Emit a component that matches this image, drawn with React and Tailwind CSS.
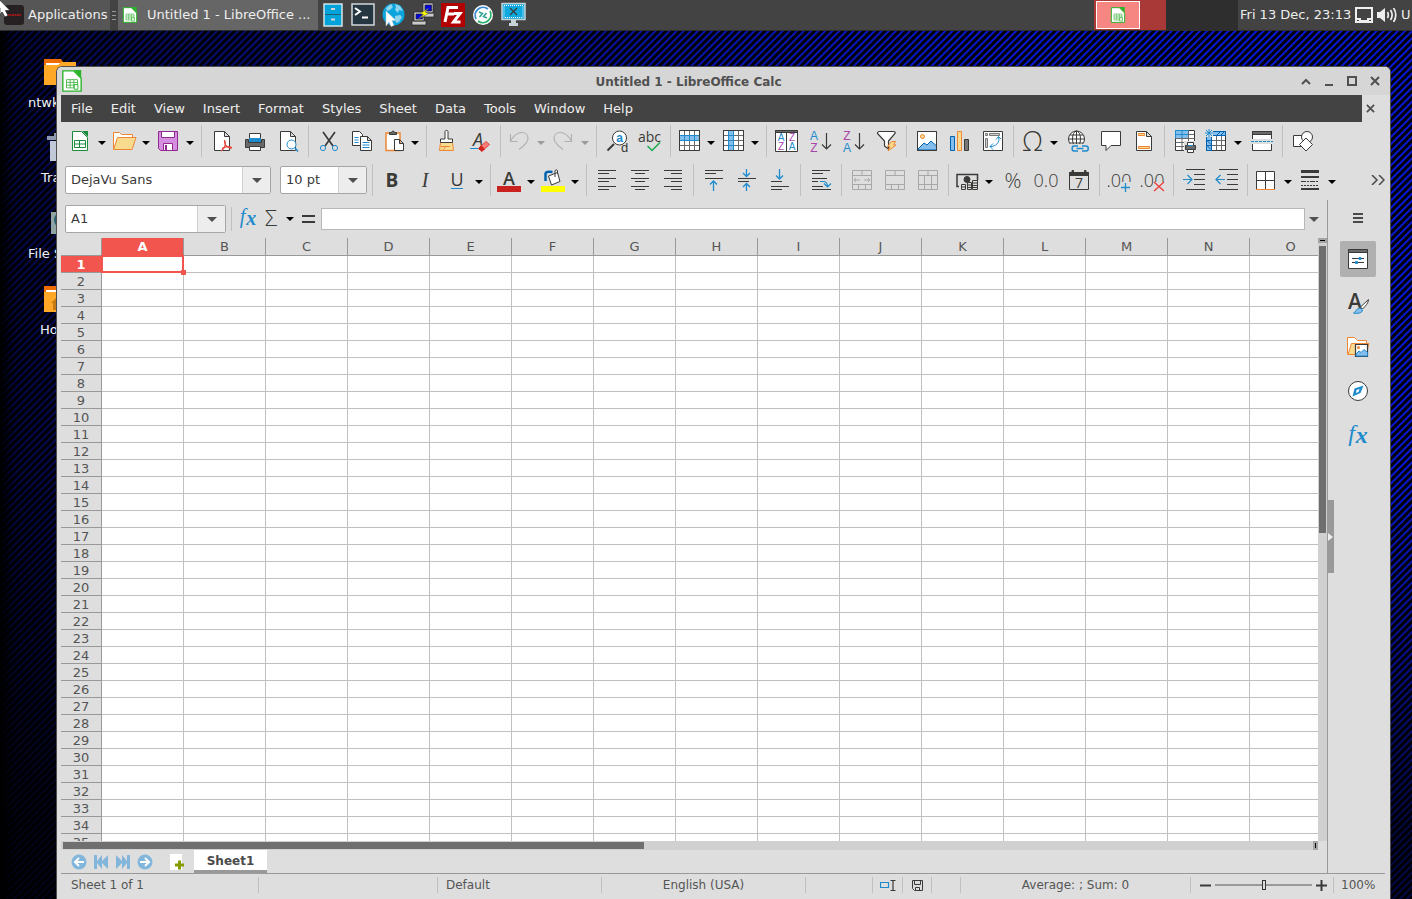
import React, { useState } from 'react'

const DARK = '#3a3a38'
const BLUE = '#1e8bcd'
const SKY = '#83beec'
const ORANGE = '#ed8733'
const PURPLE = '#a845ab'
const SANS = '"Open Sans", sans-serif'
const NARROW = '"Liberation Sans", sans-serif'
const SERIF = '"Liberation Serif", serif'

const COLUMNS = 'ABCDEFGHIJKLMNO'.split('')
const ROWS = Array.from({ length: 35 }, (_, i) => i + 1)
const MENUS = ['File', 'Edit', 'View', 'Insert', 'Format', 'Styles', 'Sheet', 'Data', 'Tools', 'Window', 'Help']

const Svg = ({ children, className = 'size-6' }) => (
  <svg viewBox="0 0 24 24" fill="none" stroke={DARK} strokeWidth="1" className={`${className} block shrink-0 overflow-visible`} aria-hidden="true">
    {children}
  </svg>
)

const Glyph = ({ x, y, size, fill = DARK, weight = 400, style = 'normal', font = SANS, children }) => (
  <text x={x} y={y} fontSize={size} fill={fill} stroke="none" textAnchor="middle" fontFamily={font} fontWeight={weight} fontStyle={style}>{children}</text>
)

const Lines = ({ rows, color = DARK }) => rows.map(([x1, x2, y]) => <path key={y} stroke={color} d={`M${x1} ${y}H${x2}`} />)

const Page = ({ x = 5.5, color = DARK }) => (
  <path fill="#fff" stroke={color} d={`M${x} 2.5h10l5 5v14h-15z M${x + 10} 2.5v5h5`} />
)

/* file and edit icons */
const NewIcon = () => (
  <Svg>
    <path fill="#fff" stroke="#1b8b3e" d="M3.5 2.5h9l6 6v13h-15z" />
    <path fill="#1b8b3e" stroke="none" d="M13 2h6v6z" />
    <path stroke="#1b8b3e" d="M5.5 11.5h11v7h-11z M5.5 15h11 M10.5 11.5v7" />
  </Svg>
)
const OpenIcon = () => (
  <Svg>
    <path fill="#fff" stroke={ORANGE} d="M.5 20.5v-17h6l2 2h11v4" />
    <path fill="#f8db8f" stroke={ORANGE} d="M4.5 8.5H23l-4 12H.5z" />
  </Svg>
)
const SaveIcon = () => (
  <Svg>
    <path fill="#d58fe0" stroke="#92278f" d="M1.5 2.5h19v19h-17l-2-2z" />
    <path fill="#fff" stroke="#92278f" d="M4.5 2.5h13v6h-13z M6.5 14.5h9v7h-9z" />
    <path stroke="#92278f" strokeWidth="2" d="M9 16v5" />
  </Svg>
)
const PdfIcon = () => (
  <Svg>
    <Page />
    <path stroke="#e8453c" strokeWidth="1.3" d="M15.5 11c-.5 4 2 7.5 7 8.500 M16 12c1 4-1 8-4 10 M13 19.500c3-2 6-2.500 10-1" />
  </Svg>
)
const PrintIcon = () => (
  <Svg>
    <path fill="#fff" d="M7.5 4.5h11v6h-11z" />
    <path fill={BLUE} stroke="none" d="M7 9h12v4H7z" />
    <path fill="#696969" d="M3.5 10.5h3v3h13v-3h3v8h-19z" />
    <path fill="#fff" d="M7.5 17.5h11v4h-11z" />
  </Svg>
)
const PreviewIcon = () => (
  <Svg>
    <Page />
    <circle cx="16.5" cy="15.5" r="4.5" fill="#fff" stroke={BLUE} />
    <path stroke={BLUE} strokeWidth="1.5" d="M20 19l3 3.5" />
  </Svg>
)
const CutIcon = () => (
  <Svg>
    <path strokeWidth="1.7" d="M7 3l10 14 M19 3L9 17" />
    <circle cx="7" cy="19" r="2.6" stroke={BLUE} />
    <circle cx="19" cy="19" r="2.6" stroke={BLUE} />
  </Svg>
)
const CopyIcon = () => (
  <Svg>
    <path fill="#fff" d="M3.5 2.5h7l3 3v11h-10z" />
    <path stroke={BLUE} d="M5.5 8.5h4 M5.5 11h4 M5.5 13.5h4" />
    <path fill="#fff" d="M11.5 7.5h7l4 4v10h-11z M18.5 7.5v4h4" />
    <path stroke={BLUE} d="M13.5 13.5h7 M13.5 16h7 M13.5 18.5h7" />
  </Svg>
)
const PasteIcon = () => (
  <Svg>
    <path fill="#fff" stroke={ORANGE} strokeWidth="1.5" d="M4 4h14v17.5H4z" />
    <path fill="#696969" d="M7.5 5.5v-2h2l1-1.5h1l1 1.5h2v2z" />
    <path fill="#fff" d="M12.5 10.5h5l4 4v7h-9z M17.5 10.5v4h4" />
  </Svg>
)
const CloneIcon = () => (
  <Svg>
    <path fill="#f8db8f" stroke={ORANGE} d="M6.5 13.5h12l1 8h-14z M7 17.5h9 M9 21c1-1 2-2 2-3.500" />
    <path fill="#fff" d="M11 10V2.500c0-1.500 3-1.500 3 0V10h4.500v3.500h-12V10z" />
  </Svg>
)
const ClearIcon = () => (
  <Svg>
    <Glyph x="11" y="17" size="18" style="italic">A</Glyph>
    <path stroke={BLUE} d="M3 19.5h8" />
    <path fill="#f77d7b" stroke="#e8453c" d="M14 17l5-4.500 3.500 3-5 4.500z" />
    <path fill="#d7201f" stroke="#c9211e" d="M11.500 19.500l2.500-2.500 3.500 3-2.500 2.500z" />
  </Svg>
)
const UndoIcon = () => (
  <Svg><path stroke="#b1b1b1" strokeWidth="1.2" d="M2.5 5v7.500h7 M2.500 12C6 6 10 3.500 14 3.500c4 0 6 3 6 6 0 4-5 8-9 11" /></Svg>
)
const RedoIcon = () => (
  <Svg><path stroke="#b1b1b1" strokeWidth="1.2" d="M19.5 5v7.500h-7 M19.500 12C16 6 12 3.500 8 3.500c-4 0-6 3-6 6 0 4 5 8 9 11" /></Svg>
)
const FindIcon = () => (
  <Svg>
    <circle cx="15.5" cy="9" r="7" fill="#fff" />
    <path strokeWidth="2" d="M10 15l-6.500 6.500" />
    <Glyph x="15.5" y="13" size="12" weight="700" fill={BLUE} font={NARROW}>a</Glyph>
    <Glyph x="20.5" y="23" size="13" font={NARROW}>d</Glyph>
  </Svg>
)
const SpellIcon = () => (
  <Svg>
    <Glyph x="12.5" y="13" size="14">abc</Glyph>
    <path stroke="#18ab50" strokeWidth="1.5" d="M10.5 17l4.500 4.500 8-8" />
  </Svg>
)

/* table, sorting and insert icons */
const RowIcon = () => (
  <Svg>
    <path fill="#fff" d="M1.5 1.5h20v20h-20z" />
    <path stroke="#696969" d="M6.5 2v19 M11.5 2v19 M16.5 2v19 M2 16.5h19" />
    <path fill={SKY} stroke={BLUE} d="M1.5 6.5h20v5h-20z" />
    <path stroke={BLUE} d="M6.5 7v4 M11.5 7v4 M16.5 7v4" />
    <path d="M1.5 1.5h20v20h-20z" />
  </Svg>
)
const ColIcon = () => (
  <Svg>
    <path fill="#fff" d="M1.5 1.5h20v20h-20z" />
    <path stroke="#696969" d="M2 6.5h19 M2 11.5h19 M2 16.5h19 M16.5 2v19" />
    <path fill={SKY} stroke={BLUE} d="M6.5 1.5h5v20h-5z" />
    <path stroke={BLUE} d="M7 6.5h4 M7 11.5h4 M7 16.5h4" />
    <path d="M1.5 1.5h20v20h-20z" />
  </Svg>
)
const SortIcon = () => (
  <Svg>
    <path fill="#fff" d="M1.5 1.5h22v21h-22z M12.5 2v20" />
    <path fill="#696969" d="M1.5 1.5h22v2h-22z" />
    <Glyph x="7" y="12" size="10" fill={BLUE} font={NARROW}>A</Glyph>
    <Glyph x="7" y="21" size="10" fill={PURPLE} font={NARROW}>Z</Glyph>
    <Glyph x="18" y="12" size="10" fill={PURPLE} font={NARROW}>Z</Glyph>
    <Glyph x="18" y="21" size="10" fill={BLUE} font={NARROW}>A</Glyph>
  </Svg>
)
const SortArrow = ({ top, topColor, bottom, bottomColor }) => (
  <Svg>
    <Glyph x="7" y="11" size="12" fill={topColor} font={NARROW}>{top}</Glyph>
    <Glyph x="7" y="23" size="12" fill={bottomColor} font={NARROW}>{bottom}</Glyph>
    <path strokeWidth="1.2" d="M19.5 4v16 M15 15.500l4.500 4.500 4.500-4.500" />
  </Svg>
)
const FilterIcon = () => (
  <Svg>
    <path fill="#fff" strokeWidth="1.2" d="M4.5 4.5c0-1 .5-2 2-2h14c1.500 0 2 1 1.500 2L15.500 12v8l-4-3v-5z" />
    <path fill="#f8db8f" stroke={ORANGE} d="M18.500 12.500h4l-2 3.500h2.500l-8 6 2-4.500h-2.500z" />
  </Svg>
)
const ImageIcon = () => (
  <Svg>
    <path fill="#fff" d="M3.5 2.5h19v19h-19z" />
    <circle cx="8.5" cy="7.5" r="2" fill="#f8db8f" stroke={ORANGE} />
    <path fill={SKY} stroke="#0063b1" d="M4 20l6-6 3 2 4-4 5.500 5v4H4z" />
    <path d="M3.5 2.5h19v19h-19z" />
  </Svg>
)
const ChartIcon = () => (
  <Svg>
    <path fill={SKY} stroke="#0063b1" d="M3.5 7.5h4v14h-4z" />
    <path fill="#f8db8f" stroke={ORANGE} d="M10.5 2.5h4v19h-4z" />
    <path fill="#797774" d="M17.5 10.5h4v11h-4z" />
  </Svg>
)
const PivotIcon = () => (
  <Svg>
    <path fill="#fff" d="M3.5 2.5h19v19h-19z" />
    <path stroke="#797774" fill="#d0d0d0" d="M5.5 4.5h2v2h-2z M9.5 4.5h10v2h-10z M5.5 9.5h2v9h-2z" />
    <path stroke={BLUE} d="M18.500 8c2 5-3 10-8.500 9.500 M16 10.500l2.500-3 2.500 2.500 M13 14.500l-3 3 3 3" />
  </Svg>
)
const OmegaIcon = () => <Svg><Glyph x="11.5" y="22" size="27" weight="300">Ω</Glyph></Svg>
const LinkIcon = () => (
  <Svg>
    <circle cx="11.5" cy="10" r="8" fill="#fff" />
    <ellipse cx="11.5" cy="10" rx="4" ry="8" />
    <path d="M11.5 2v16 M3.5 10h16 M5 6h13 M5 14h13" />
    <path fill="#dedede" stroke="none" d="M5 15h20v9H5z" />
    <path stroke={BLUE} strokeWidth="1.5" d="M13 17H9c-2.500 0-2.500 5 0 5h4 M17 17h4c3 0 3 5 0 5h-4 M11.500 19.500h7" />
  </Svg>
)
const CommentIcon = () => <Svg><path fill="#fff" d="M3.5 2.5h19v14H13l-5 5v-5H3.5z" /></Svg>
const HeaderIcon = () => (
  <Svg>
    <Page />
    <path fill="#f8db8f" stroke={ORANGE} d="M7.5 4.5h6v2h-6z M7.5 17.5h11v2h-11z" />
  </Svg>
)
const RangeIcon = () => (
  <Svg>
    <path fill="#fff" d="M3.5 1.5h19v20h-19z" />
    <path fill={SKY} stroke={BLUE} d="M3.5 1.5h13v8h-13z M3.5 5.5h13 M10 2v7" />
    <path stroke="#696969" d="M3.5 9.5h19 M3.5 13.5h19 M3.5 17.5h19 M10 10v11 M16.5 2v19 M17 5.5h5" />
    <path fill="#dedede" stroke="none" d="M12 12h12v12H12z" />
    <path fill="#696969" d="M13.5 16.5h10v4h-10z" />
    <path fill="#fff" d="M15.5 13.5h6v3h-6z M15.5 20.5h6v3h-6z" />
    <path stroke={BLUE} d="M16 16.5h5" />
  </Svg>
)
const FreezeIcon = () => (
  <Svg>
    <path fill="#fff" d="M1.5 2.5h19v19h-19z" />
    <path stroke="#696969" d="M7 11.5h13 M7 16.5h13 M11.5 7v14 M16.5 7v14" />
    <path fill={SKY} stroke="#0063b1" d="M1.5 2.5h19v4h-14v15h-5z M11.5 6.5l4-4 M15.5 6.5l4-4 M2 11.5l4 4 M2 16.5l4 4 M2 11.5h4 M2 16.5h4" />
    <path fill="#dedede" stroke="none" d="M0 0h8v8H0z" />
    <path stroke={BLUE} d="M4 0v8 M0 4h8 M1 1l6 6 M7 1L1 7" />
  </Svg>
)
const SplitIcon = () => (
  <Svg>
    <path fill="#fff" d="M3.5 10V2.5h19V10 M3.5 15v6.5h19V15" />
    <path fill="#696969" d="M3.5 2.5h19v3h-19z" />
    <path stroke={BLUE} strokeDasharray="3 1" d="M2 12.5h22" />
  </Svg>
)
const ShapesIcon = () => (
  <Svg>
    <path fill="#fff" d="M3.5 6.5h11v11h-11z" />
    <circle cx="17" cy="8" r="5.5" fill="#fff" />
    <path fill="#fff" d="M16 9l6.500 6.500L16 22l-6.500-6.500z" />
  </Svg>
)

/* formatting icons */
const BoldIcon = () => <Svg><Glyph x="12" y="19" size="19" weight="700">B</Glyph></Svg>
const ItalicIcon = () => <Svg><Glyph x="12" y="19" size="20" style="italic" font={SERIF}>I</Glyph></Svg>
const UnderlineIcon = () => (
  <Svg>
    <Glyph x="11" y="18" size="18">U</Glyph>
    <path stroke={BLUE} d="M5 20.5h12" />
  </Svg>
)
const FontColorIcon = () => (
  <Svg>
    <Glyph x="11" y="17" size="18" weight="600">A</Glyph>
    <path fill="#c9211e" stroke="none" d="M-1 18h24v6H-1z" />
  </Svg>
)
const FillIcon = () => (
  <Svg>
    <path stroke="#0063b1" strokeWidth="2.5" d="M3.5 13V5.500c0-1.500 2-2 7-1.500" />
    <path fill="#fff" d="M6.500 8l9-3.500 2.500 9L9.500 17z M13 9V3c0-1.500 2.500-1.500 2.500 0v3" />
    <path fill="#ffff00" stroke="none" d="M-1 18h24v6H-1z" />
  </Svg>
)
const AlignLeft = () => <Svg><Lines rows={[[4, 22, 2.5], [4, 15, 5.5], [4, 22, 10.5], [4, 15, 13.5], [4, 22, 18.5], [4, 15, 21.5]]} /></Svg>
const AlignCenter = () => <Svg><Lines rows={[[4, 22, 2.5], [8, 18, 5.5], [4, 22, 10.5], [8, 18, 13.5], [4, 22, 18.5], [8, 18, 21.5]]} /></Svg>
const AlignRight = () => <Svg><Lines rows={[[4, 22, 2.5], [11, 22, 5.5], [4, 22, 10.5], [11, 22, 13.5], [4, 22, 18.5], [11, 22, 21.5]]} /></Svg>
const AlignTop = () => (
  <Svg>
    <Lines rows={[[4, 22, 2.5], [4, 15, 5.5], [4, 22, 10.5]]} />
    <path stroke={BLUE} strokeWidth="1.3" d="M12.5 23V13 M9 16.500l3.500-3.500 3.500 3.500" />
  </Svg>
)
const AlignMiddle = () => (
  <Svg>
    <Lines rows={[[4, 22, 10.5], [4, 15, 13.5]]} />
    <path stroke={BLUE} strokeWidth="1.3" d="M12.5 1v7.500 M9 5l3.500 3.500L16 5 M12.500 23v-7.500 M9 19l3.500-3.500L16 19" />
  </Svg>
)
const AlignBottom = () => (
  <Svg>
    <Lines rows={[[4, 15, 13.5], [4, 22, 18.5], [4, 15, 21.5]]} />
    <path stroke={BLUE} strokeWidth="1.3" d="M12.5 1v10 M9 7.500l3.500 3.500L16 7.500" />
  </Svg>
)
const WrapIcon = () => (
  <Svg>
    <Lines rows={[[4, 22, 2.5], [4, 15, 5.5], [4, 19, 10.5], [4, 10, 13.5], [4, 15, 18.5], [4, 23, 21.5]]} />
    <path stroke={BLUE} strokeWidth="1.2" d="M12 13.500h3c3 0 4.500 2 4.500 5 M16 15.500l3.500 3.500 3.500-3.500" />
  </Svg>
)
const MergeIcon = ({ kind }) => (
  <Svg>
    <path stroke="#a8a8a8" d="M3.5 2.5h19v19h-19z M3.5 7.5h19 M3.5 16.5h19 M13 2.5v5 M9.5 16.5v5 M16.5 16.5v5" />
    {kind === 'across' && <path stroke="#a8a8a8" d="M5 12h6 M15 12h6 M7 10l-2 2 2 2 M19 10l2 2-2 2" />}
    {kind === 'split' && <path stroke="#a8a8a8" d="M9.5 7.5v9 M16.5 7.5v9" />}
  </Svg>
)
const CurrencyIcon = () => (
  <Svg>
    <path strokeWidth="1.5" d="M3 18.500H1v-12h20.500v6" />
    <circle cx="11" cy="11.5" r="3" fill={DARK} />
    <path fill="#dedede" d="M5.5 16.5h4v5h-4z M11.5 14.5h4v7h-4z M16.5 12.5h5v9h-5z" />
    <path d="M5.5 19h4 M11.5 17h4 M11.5 19.5h4 M16.5 15h5 M16.5 17.5h5 M16.5 19.5h5" />
  </Svg>
)
const PercentIcon = () => <Svg><Glyph x="13" y="20" size="21" weight="300">%</Glyph></Svg>
const NumberIcon = () => <Svg><Glyph x="13" y="19" size="18" weight="300">0.0</Glyph></Svg>
const DateIcon = () => (
  <Svg>
    <path fill="none" d="M3.5 4.5h19v17h-19z" />
    <path fill={DARK} d="M3.5 4.5h19v3h-19z M6 2.5h1.500v2H6z M18.500 2.500H20v2h-1.500z" />
    <Glyph x="13" y="20" size="14">7</Glyph>
  </Svg>
)
const AddDecimalIcon = () => (
  <Svg>
    <Glyph x="12" y="19" size="18" weight="300">.00</Glyph>
    <path fill="#dedede" stroke="none" d="M15 14h9v10h-9z" />
    <path stroke={BLUE} strokeWidth="1.3" d="M18.5 15v9 M14 19.500h9" />
  </Svg>
)
const DelDecimalIcon = () => (
  <Svg>
    <Glyph x="12" y="19" size="18" weight="300">.00</Glyph>
    <path fill="#dedede" stroke="none" d="M15 14h9v10h-9z" />
    <path stroke="#ed3d3b" strokeWidth="1.3" d="M14 14l10 9 M24 14l-10 9" />
  </Svg>
)
const IndentIcon = ({ back }) => (
  <Svg>
    <Lines rows={[[5, 24, 1.5], [13, 24, 6.5], [13, 24, 11.5], [13, 24, 16.5], [5, 24, 21.5]]} />
    <path stroke={BLUE} strokeWidth="1.2" d={back ? 'M11 11.500H2 M6.500 7L2 11.500 6.500 16' : 'M2 11.500h9 M6.500 7l4.500 4.500L6.500 16'} />
  </Svg>
)
const BorderIcon = () => (
  <Svg>
    <path fill="#fff" d="M1.5 21V3.5h18V21 M10.5 3.5V21 M1.5 12.5h18" />
    <path stroke={ORANGE} d="M1 21.5h19" />
  </Svg>
)
const LineStyleIcon = () => (
  <Svg>
    <path strokeWidth="3" d="M2 3.5h18" />
    <path strokeWidth="2" d="M2 9h18 M2 21h18" />
    <path strokeDasharray="5 1 2 1" d="M2 13.5h18" />
    <path strokeDasharray="2 1" d="M2 17.5h18" />
  </Svg>
)
const FxIcon = ({ size = 20, y = 16 }) => (
  <Svg>
    <Glyph x="12" y={y} size={size} fill={BLUE} style="italic" font={SERIF}>
      f<tspan dx="1" dy="2" fontWeight="700">x</tspan>
    </Glyph>
  </Svg>
)
const CalcIcon = ({ className }) => (
  <Svg className={className}>
    <path fill="#fff" stroke="#2bb52b" strokeWidth="1.5" d="M2 1h12l8 8v14H2z" />
    <path fill="#2bb52b" stroke="none" d="M14 0h8v9z" />
    <path stroke="#4db84d" d="M6 10.5h12v9H6z M6 13.5h12 M6 16.5h12 M10 10.5v9 M14 10.5v9" />
    <path fill="#fff" stroke="#2bb52b" d="M14.5 16h4v5h-4z" />
  </Svg>
)

const STANDARD = [
  { label: 'New', icon: <NewIcon />, drop: true },
  { label: 'Open', icon: <OpenIcon />, drop: true },
  { label: 'Save', icon: <SaveIcon />, drop: true },
  null,
  { label: 'Export as PDF', icon: <PdfIcon /> },
  { label: 'Print', icon: <PrintIcon /> },
  { label: 'Print preview', icon: <PreviewIcon /> },
  null,
  { label: 'Cut', icon: <CutIcon /> },
  { label: 'Copy', icon: <CopyIcon /> },
  { label: 'Paste', icon: <PasteIcon />, drop: true },
  null,
  { label: 'Clone formatting', icon: <CloneIcon /> },
  { label: 'Clear formatting', icon: <ClearIcon /> },
  null,
  { label: 'Undo', icon: <UndoIcon />, drop: true, off: true },
  { label: 'Redo', icon: <RedoIcon />, drop: true, off: true },
  null,
  { label: 'Find and replace', icon: <FindIcon /> },
  { label: 'Spelling', icon: <SpellIcon /> },
  null,
  { label: 'Row', icon: <RowIcon />, drop: true },
  { label: 'Column', icon: <ColIcon />, drop: true },
  null,
  { label: 'Sort', icon: <SortIcon /> },
  { label: 'Sort ascending', icon: <SortArrow top="A" topColor={BLUE} bottom="Z" bottomColor={PURPLE} /> },
  { label: 'Sort descending', icon: <SortArrow top="Z" topColor={PURPLE} bottom="A" bottomColor={BLUE} /> },
  { label: 'AutoFilter', icon: <FilterIcon /> },
  null,
  { label: 'Insert image', icon: <ImageIcon /> },
  { label: 'Insert chart', icon: <ChartIcon /> },
  { label: 'Pivot table', icon: <PivotIcon /> },
  null,
  { label: 'Special character', icon: <OmegaIcon />, drop: true },
  { label: 'Hyperlink', icon: <LinkIcon /> },
  { label: 'Comment', icon: <CommentIcon /> },
  { label: 'Headers and footers', icon: <HeaderIcon /> },
  null,
  { label: 'Define print area', icon: <RangeIcon /> },
  { label: 'Freeze rows and columns', icon: <FreezeIcon />, drop: true },
  { label: 'Split window', icon: <SplitIcon /> },
  null,
  { label: 'Show draw functions', icon: <ShapesIcon /> },
]

const FORMATTING = [
  null,
  { label: 'Bold', icon: <BoldIcon /> },
  { label: 'Italic', icon: <ItalicIcon /> },
  { label: 'Underline', icon: <UnderlineIcon />, drop: true },
  null,
  { label: 'Font color', icon: <FontColorIcon />, drop: true },
  { label: 'Background color', icon: <FillIcon />, drop: true },
  null,
  { label: 'Align left', icon: <AlignLeft /> },
  { label: 'Align center', icon: <AlignCenter /> },
  { label: 'Align right', icon: <AlignRight /> },
  null,
  { label: 'Align top', icon: <AlignTop /> },
  { label: 'Center vertically', icon: <AlignMiddle /> },
  { label: 'Align bottom', icon: <AlignBottom /> },
  null,
  { label: 'Wrap text', icon: <WrapIcon /> },
  null,
  { label: 'Merge and center', icon: <MergeIcon kind="across" />, off: true },
  { label: 'Merge cells', icon: <MergeIcon />, off: true },
  { label: 'Unmerge cells', icon: <MergeIcon kind="split" />, off: true },
  null,
  { label: 'Currency', icon: <CurrencyIcon />, drop: true },
  { label: 'Percent', icon: <PercentIcon /> },
  { label: 'Number', icon: <NumberIcon /> },
  { label: 'Date', icon: <DateIcon /> },
  null,
  { label: 'Add decimal place', icon: <AddDecimalIcon /> },
  { label: 'Delete decimal place', icon: <DelDecimalIcon /> },
  null,
  { label: 'Increase indent', icon: <IndentIcon /> },
  { label: 'Decrease indent', icon: <IndentIcon back /> },
  null,
  { label: 'Borders', icon: <BorderIcon />, drop: true },
  { label: 'Border style', icon: <LineStyleIcon />, drop: true },
]

const Caret = ({ className = 'text-black' }) => (
  <svg viewBox="0 0 8 4" className={`w-2 h-1 shrink-0 ${className}`} aria-hidden="true"><path fill="currentColor" d="M0 0h8L4 4z" /></svg>
)

function ToolItems({ items }) {
  return items.map((item, i) => item === null
    ? <div key={i} className="w-2 h-8 shrink-0 pl-1"><div className="w-px h-full bg-[#c0c0c0]" /></div>
    : (
      <button key={i} type="button" aria-label={item.label} disabled={item.off} className={`${item.drop ? 'w-11' : 'w-[33px]'} h-8 shrink-0 flex items-center gap-1 pl-1`}>
        {item.icon}
        {item.drop && <span className="pt-1 pl-px"><Caret className={item.off ? 'text-[#9a9a9a]' : 'text-black'} /></span>}
      </button>
    ))
}

const Combo = ({ label, value, className }) => (
  <div className={`relative h-7 shrink-0 ${className}`}>
    <select aria-label={label} defaultValue={value} className="appearance-none w-full h-full pl-[5px] bg-white border border-[#a6a6a6] rounded-[2px] text-[#3a3a3a] outline-none">
      <option>{value}</option>
    </select>
    <span className="absolute inset-y-px right-px w-7 bg-[#ededed] border-l border-[#cfcfcf] flex items-center justify-center pointer-events-none">
      <svg viewBox="0 0 10 5" className="w-[10px] h-[5px]"><path fill="#505050" d="M0 0h10L5 5z" /></svg>
    </span>
  </div>
)

/* panel launchers */
const LAUNCHERS = [
  ['Files', (
    <Svg>
      <path fill="#00a3da" stroke="#d5e3e8" strokeWidth="1.5" d="M3 1h18v22H3z" />
      <path stroke="#1c5f78" d="M4 11.500h16" />
      <path stroke="#d5d5d5" strokeWidth="2" d="M10 6h4 M10 16.500h4" />
    </Svg>
  )],
  ['Terminal', (
    <Svg>
      <path fill="#263640" stroke="#cfd8dc" strokeWidth="1.5" d="M1 1h22v21H1z" />
      <path stroke="#fff" strokeWidth="2" d="M4 5l5 3.500L4 12 M11 14.500h6" />
    </Svg>
  )],
  ['Web browser', (
    <Svg>
      <circle cx="12.5" cy="11.5" r="11" fill="#0aa5dd" stroke="none" />
      <path fill="#8fd4ec" stroke="none" d="M5 5l5-4 2 3-3 3-3 1z M14 1l5 2 3 5-4-1-1 3-3-3 1-3z M14 13l5-1 2 2-3 5-3 1-1-4z" />
      <path fill="#fff" stroke="#b8c4c8" strokeWidth=".5" d="M5 8v15l3-4 2 4.500 3-1-2-5h4z" />
    </Svg>
  )],
  ['PuTTY', (
    <Svg>
      <path fill="#c9c9c9" stroke="#222" strokeWidth=".7" d="M12 0h10v10H12z M11 10h12v4H11z M3 9h10v9H3z M1 18h14v4H1z" />
      <path fill="#0000e0" stroke="#222" strokeWidth=".7" d="M14 2h6.500v6H14z M5 11h6.500v5H5z" />
      <path fill="#ffff00" stroke="#555" strokeWidth=".5" d="M18 5l-9 5.500 3.500 1L7 16l10.500-5.500-3.500-1.500z" />
    </Svg>
  )],
  ['FileZilla', (
    <Svg>
      <path fill="#b30000" stroke="none" d="M0 0h24v24H0z" />
      <path stroke="#fff" strokeWidth="3" d="M4 19L7 4.500h10 M6 11h7 M13 10.500h6L12.500 19h7" />
    </Svg>
  )],
  ['Remote desktop', (
    <Svg>
      <circle cx="12" cy="12" r="10" fill="#fff" stroke="none" />
      <path stroke="#3c8bd0" strokeWidth="1.8" d="M5 16a8 8 0 0 1 12-10" />
      <path stroke="#27b06b" strokeWidth="1.8" d="M19 8a8 8 0 0 1-12 10" />
      <path stroke="#2aa08e" strokeWidth="1.5" d="M8 9l3.500 1.500L8.500 14 M16 15l-3.500-1.500L15.500 10" />
    </Svg>
  )],
  ['Screenshot', (
    <Svg>
      <path fill="#0fa9df" stroke="#c5d3d9" strokeWidth="1.5" d="M1 .5h23v16H1z" />
      <path stroke="#fff" strokeDasharray="1 1" d="M3 2.5h19v12H3z" />
      <path strokeWidth="1.2" d="M9 5l7 7 M16 5l-7 7" />
      <path fill="#c5d3d9" stroke="none" d="M10 17h5v3h2v3H8v-3h2z" />
    </Svg>
  )],
]

function Panel() {
  return (
    <header className="h-[31px] shrink-0 bg-[#434343] border-b border-[#2d2d2d] flex items-center text-[13px] text-[#eeeeee]">
      <button type="button" className="h-full w-[110px] bg-[#565656] flex items-center gap-1 pl-1 whitespace-nowrap">
        <span className="w-5 h-5 rounded-[3px] bg-[#262022] flex items-center justify-center">
          <svg viewBox="0 0 14 4" className="w-[14px] h-1"><path stroke="#c01818" strokeWidth="1.5" fill="none" strokeDasharray="2 .5" d="M0 2h14" /></svg>
        </span>
        Applications
      </button>
      <span className="w-2 h-full flex flex-col items-center justify-center gap-[3px]">
        <i className="w-1 h-px bg-[#999]" /><i className="w-1 h-px bg-[#999]" /><i className="w-1 h-px bg-[#999]" />
      </span>
      <button type="button" className="h-full w-[200px] bg-[#666666] flex items-center gap-[9px] pl-1 whitespace-nowrap">
        <CalcIcon className="size-4" />
        Untitled 1 - LibreOffice ...
      </button>
      <nav className="flex gap-[6px] pl-[3px]">
        {LAUNCHERS.map(([name, icon]) => <button key={name} type="button" aria-label={name}>{icon}</button>)}
      </nav>
      <div className="ml-auto h-full flex items-center">
        <div className="h-full w-[72px] bg-[#a93936] pl-[2px] flex items-center">
          <button type="button" aria-label="Workspace 1" className="w-11 h-7 border border-white bg-[#f58682] flex items-center justify-center"><CalcIcon className="size-4" /></button>
        </div>
        <div className="h-full w-[72px] bg-[#2e2e2e]" />
        <span className="w-[117px] pl-[2px] whitespace-nowrap">Fri 13 Dec, 23:13</span>
        <svg viewBox="0 0 18 16" className="w-[18px] h-4" fill="none" stroke="#eee" strokeWidth="2"><path d="M1 1h16v14H1z" /><path d="M1 12h4v2h8v-2h4" /></svg>
        <svg viewBox="0 0 20 14" className="w-5 h-[14px] ml-1 mr-1" fill="none" stroke="#eee" strokeWidth="1.7">
          <path fill="#eee" stroke="none" d="M0 4h3l5-4v14l-5-4H0z" />
          <path d="M10.500 4c1 2 1 4 0 6 M13.500 2c2 3 2 7 0 10 M16.500 0c3 4 3 10 0 14" />
        </svg>
        <span className="w-[11px]">U</span>
      </div>
      <svg viewBox="0 0 12 18" className="absolute left-0 top-0 w-3 h-[18px]"><path fill="#fff" stroke="#222" strokeWidth=".7" d="M-6-6v12l4 0 2 2v7l2-3 3 5 3-1.500-2.500-5H10z" /></svg>
    </header>
  )
}

const Folder = ({ children }) => (
  <svg viewBox="0 0 32 28" className="w-8 h-7">
    <path fill="#ef6c00" d="M0 1h17l2 3H32v6H0z" />
    <path fill="#fff" d="M2 5h14v2H2z" />
    <path fill="#ffa726" d="M0 7h14l3-3h15v23H0z" />
    {children}
  </svg>
)

function Desktop() {
  return (
    <div className="text-[13px] text-[#f2f2f2] whitespace-nowrap">
      <div className="absolute left-11 top-[27px]"><Folder /></div>
      <span className="absolute left-7 top-[62px]">ntwk</span>
      <svg viewBox="0 0 20 30" className="absolute left-[47px] top-[101px] w-5 h-[30px]"><path fill="#8d98ae" d="M0 4h7V1h6v3h7v4H0z" /><path fill="#c1c9d8" d="M3 9h16v20H3z" /></svg>
      <span className="absolute left-[41px] top-[137px]">Trash</span>
      <svg viewBox="0 0 20 24" className="absolute left-[51px] top-[180px] w-5 h-6"><path fill="#90a4a4" d="M0 1h20v22H0z" /><circle cx="12" cy="9" r="9" fill="#2b5f6b" /></svg>
      <span className="absolute left-7 top-[213px]">File System</span>
      <div className="absolute left-11 top-[254px]"><Folder><path fill="#c77a12" d="M7 18l5-5 5 5v7H9v-7z" /></Folder></div>
      <span className="absolute left-10 top-[289px]">Home</span>
    </div>
  )
}

function Grid() {
  return (
    <div className="flex-1 min-h-0 flex">
      <div className="flex-1 min-w-0 overflow-hidden bg-white">
        <table className="table-fixed w-[1271px] border-separate border-spacing-0 text-[13px] leading-[14px] text-[#555555]">
          <thead>
            <tr>
              <th className="w-[41px] h-[18px] bg-[#dedede] border-r border-b border-[#999999]" aria-label="Select all" />
              {COLUMNS.map(c => (
                <th key={c} scope="col" className={`w-[82px] h-[18px] border-r border-b border-[#999999] text-center ${c === 'A' ? 'bg-[#f2554e] text-white font-bold' : 'bg-[#dedede] font-normal'}`}>{c}</th>
              ))}
            </tr>
          </thead>
          <tbody>
            {ROWS.map(r => (
              <tr key={r}>
                <th scope="row" className={`h-[17px] pt-[2px] border-r border-b border-[#999999] text-center ${r === 1 ? 'bg-[#f2554e] text-white font-bold' : 'bg-[#dedede] font-normal'}`}>{r}</th>
                {COLUMNS.map(c => (
                  <td key={c} className="relative h-[17px] border-r border-b border-[#c0c0c0]">
                    {r === 1 && c === 'A' && (
                      <>
                        <span className="absolute -inset-px z-10 border-2 border-[#f2554e]" />
                        <span className="absolute -right-[3px] -bottom-[3px] z-10 size-[5px] bg-[#f2554e]" />
                      </>
                    )}
                  </td>
                ))}
              </tr>
            ))}
          </tbody>
        </table>
      </div>
      <div className="w-[9px] shrink-0 bg-[#d0d0d0] flex flex-col items-center">
        <span className="w-full h-[5px] bg-[#a4a4a4] flex items-center justify-center"><i className="w-[5px] h-px bg-black" /></span>
        <span className="mt-[3px] w-[7px] h-[287px] bg-[#6f6f6f]" />
      </div>
    </div>
  )
}

const NavIcon = ({ d, round }) => (
  <svg viewBox="0 0 16 16" className="size-4" fill="#82b6da">
    {round && <circle cx="8" cy="8" r="7.5" />}
    <path d={d} fill={round ? 'none' : '#82b6da'} stroke={round ? '#fff' : 'none'} strokeWidth="2" />
  </svg>
)

function SheetTabs() {
  return (
    <div className="h-[23px] shrink-0 flex items-center">
      <div className="flex gap-[6px] pl-[10px]">
        <button type="button" aria-label="First sheet"><NavIcon round d="M13 8H4 M8 4L4 8l4 4" /></button>
        <button type="button" aria-label="Previous sheet"><NavIcon d="M1 1h3v6l5-6v6l6-6v14l-6-6v6L4 9v6H1z" /></button>
        <button type="button" aria-label="Next sheet"><NavIcon d="M15 1h-3v6L7 1v6L1 1v14l6-6v6l5-6v6h3z" /></button>
        <button type="button" aria-label="Last sheet"><NavIcon round d="M3 8h9 M8 4l4 4-4 4" /></button>
      </div>
      <button type="button" aria-label="Add sheet" className="ml-[17px]">
        <svg viewBox="0 0 14 16" className="w-[14px] h-4"><path fill="#fff" d="M0 0h12v16H0z" /><path stroke="#869c00" strokeWidth="3" d="M5 11h9 M9.500 6.500v9" /></svg>
      </button>
      <button type="button" className="ml-[10px] h-full w-[73px] pt-[2px] bg-white border-b-[3px] border-[#999999] text-[12px] font-bold text-[#4a4a4a]">Sheet1</button>
    </div>
  )
}

const SIDEBAR = [
  ['Properties', (
    <Svg>
      <path fill="#fff" d="M2.5 2.5h19v19h-19z" />
      <path fill="#696969" d="M2.5 2.5h19v3h-19z" />
      <path d="M6 11.5h12 M6 15.5h12" />
      <path fill={BLUE} stroke={BLUE} d="M13 10.5h2v2h-2z M9.5 14.5h2v2h-2z" />
    </Svg>
  )],
  ['Styles', (
    <Svg>
      <Glyph x="9" y="18" size="21" weight="600">A</Glyph>
      <path fill="#fff" d="M22.500 8.500l-8 7.500 2 2c3-3 6-6 6-9.500z" />
      <path fill={SKY} stroke={BLUE} d="M14 17c-4 0-3 3.500-6.500 5 4 1 9 0 9-3z" />
    </Svg>
  )],
  ['Gallery', (
    <Svg>
      <path fill="#fff" stroke={ORANGE} d="M1.500 19.500v-17h7l3 3h9v4" />
      <path fill="#f8db8f" stroke={ORANGE} d="M5.500 8.500H23l-3 11H2z" />
      <path fill="#fff" strokeWidth="1.2" d="M9.5 9.5h12v12h-12z" />
      <circle cx="12.5" cy="12.5" r="1.5" fill={ORANGE} stroke="none" />
      <path fill={SKY} stroke={BLUE} d="M10 19l3-3 2 1.500 3-3 3.500 3v3.500H10z" />
    </Svg>
  )],
  ['Navigator', (
    <Svg>
      <circle cx="12" cy="12" r="9.5" fill="#fff" />
      <path fill={BLUE} stroke="none" d="M17.500 6.500l-3 7.500-8 3.500 2-8z" />
      <path fill="#fff" stroke="none" d="M13.500 10l-1 3-2.500 1 .5-3z" />
    </Svg>
  )],
  ['Functions', <FxIcon key="fx" size={24} y={18} />],
]

function Sidebar() {
  return (
    <aside className="w-[58px] shrink-0 border-l border-[#999999] flex">
      <button type="button" aria-label="Hide sidebar" className="self-center w-[6px] h-[73px] shrink-0 bg-[#999999] flex items-center">
        <svg viewBox="0 0 5 8" className="w-[5px] h-2"><path fill="#eee" d="M0 0l5 4-5 4z" /></svg>
      </button>
      <div className="flex-1 flex flex-col items-center gap-2 pr-[3px]">
        <button type="button" aria-label="Sidebar settings" className="h-[33px] w-9 flex items-center justify-center">
          <svg viewBox="0 0 10 10" className="size-[10px] mt-[2px]" stroke="#4a4a4a" strokeWidth="2"><path d="M0 1h10 M0 5h10 M0 9h10" /></svg>
        </button>
        {SIDEBAR.map(([name, icon], i) => (
          <button key={name} type="button" aria-label={name} className={`size-9 shrink-0 rounded-[2px] flex items-center justify-center ${i === 0 ? 'bg-[#b0b0b0]' : ''}`}>{icon}</button>
        ))}
      </div>
    </aside>
  )
}

function StatusBar() {
  const [zoom, setZoom] = useState(50)
  const cell = 'h-4 shrink-0 border-r border-[#c0c0c0] flex items-center'
  return (
    <footer className="h-[26px] shrink-0 ml-1 mr-[5px] border-t border-[#999999] flex items-center pb-[3px] text-[12px] text-[#555555] whitespace-nowrap">
      <span className={`${cell} w-[198px] pl-[10px]`}>Sheet 1 of 1</span>
      <span className={`${cell} w-[179px]`} />
      <span className={`${cell} w-[164px] pl-2`}>Default</span>
      <span className={`${cell} w-[204px] justify-center`}>English (USA)</span>
      <span className={`${cell} w-[67px]`} />
      <span className={`${cell} w-[30px] justify-center`}>
        <svg viewBox="0 0 16 11" className="w-4 h-[11px]" fill="none"><path stroke={BLUE} strokeWidth="1.2" d="M.5 2.5h8v5h-8z" /><path stroke={DARK} d="M10.5.5h5 M13 .5v10 M10.5 10.500h5" strokeWidth="1.2" /></svg>
      </span>
      <span className={`${cell} w-[29px] justify-center`}>
        <svg viewBox="0 0 11 11" className="size-[11px]" fill="none" stroke={DARK}><path d="M.5.5h10v10h-8l-2-2z M2.5.5v4h6v-4 M3.5 10.5v-3h4v3" /></svg>
      </span>
      <span className={`${cell} w-[29px]`} />
      <span className="h-4 flex-1 border-r border-[#c0c0c0] flex items-center justify-center">Average: ; Sum: 0</span>
      <span className={`${cell} w-[143px] pl-[9px] gap-1`}>
        <button type="button" aria-label="Zoom out" className="size-[11px]"><svg viewBox="0 0 11 11" stroke="#3a3a3a" strokeWidth="2"><path d="M0 5.5h11" /></svg></button>
        <input
          type="range"
          aria-label="Zoom"
          value={zoom}
          onChange={e => setZoom(e.target.value)}
          className="appearance-none w-[97px] h-[11px] bg-transparent [&::-webkit-slider-runnable-track]:h-[2px] [&::-webkit-slider-runnable-track]:bg-[#999999] [&::-webkit-slider-thumb]:appearance-none [&::-webkit-slider-thumb]:w-1 [&::-webkit-slider-thumb]:h-[10px] [&::-webkit-slider-thumb]:-mt-1 [&::-webkit-slider-thumb]:border [&::-webkit-slider-thumb]:border-[#333333] [&::-webkit-slider-thumb]:bg-[#dedede]"
        />
        <button type="button" aria-label="Zoom in" className="size-[11px]"><svg viewBox="0 0 11 11" stroke="#3a3a3a" strokeWidth="2"><path d="M0 5.5h11 M5.5 0v11" /></svg></button>
      </span>
      <span className="w-[51px] pl-[7px]">100%</span>
    </footer>
  )
}

const WINDOW_BUTTONS = [
  ['Shade', 'M1 8l4-4 4 4'],
  ['Minimize', 'M1 9h8'],
  ['Maximize', 'M1 1h8v8H1z'],
  ['Close', 'M1 1l8 8 M9 1L1 9'],
]

function CalcWindow() {
  return (
    <main className="absolute left-[56px] right-[21px] top-[35px] bottom-0 bg-[#dedede] border border-b-0 border-[#4f4f4f] rounded-t-md overflow-hidden flex flex-col text-[13px]">
      <div className="h-7 shrink-0 bg-[#d6d6d6] flex items-center px-1">
        <CalcIcon className="size-[22px]" />
        <h1 className="flex-1 pt-[2px] text-center text-[12px] font-bold text-[#505050]">Untitled 1 - LibreOffice Calc</h1>
        {WINDOW_BUTTONS.map(([name, d]) => (
          <button key={name} type="button" aria-label={name} className="w-[23px] h-6 flex items-center justify-center">
            <svg viewBox="0 0 10 10" className="size-[10px]" fill="none" stroke="#505050" strokeWidth="2"><path d={d} /></svg>
          </button>
        ))}
      </div>
      <div className="h-[27px] shrink-0 flex px-1">
        <nav className="flex-1 pl-px bg-[#434343] text-[#eeeeee] flex">
          {MENUS.map(m => <button key={m} type="button" className="px-[9px]">{m}</button>)}
        </nav>
        <button type="button" aria-label="Close document" className="w-6 flex items-center pl-1">
          <svg viewBox="0 0 10 10" className="size-[9px]" fill="none" stroke="#505050" strokeWidth="2"><path d="M1 1l8 8 M9 1L1 9" /></svg>
        </button>
      </div>
      <div className="h-[38px] shrink-0 flex items-center pl-2">
        <ToolItems items={STANDARD} />
      </div>
      <div className="h-10 shrink-0 flex items-center pl-2 pr-[5px]">
        <Combo label="Font name" value="DejaVu Sans" className="w-[206px]" />
        <Combo label="Font size" value="10 pt" className="w-[87px] ml-[9px] mr-px" />
        <ToolItems items={FORMATTING} />
        <button type="button" aria-label="More" className="ml-auto">
          <svg viewBox="0 0 14 10" className="w-[14px] h-[10px]" fill="none" stroke="#4a4a4a" strokeWidth="1.5"><path d="M1 0l5 5-5 5 M8 0l5 5-5 5" /></svg>
        </button>
      </div>
      <div className="flex-1 min-h-0 flex pl-1 pr-[5px]">
        <div className="flex-1 min-w-0 flex flex-col">
          <div className="h-[38px] shrink-0 flex items-center pl-1">
            <Combo label="Name box" value="A1" className="w-[161px]" />
            <i className="w-px h-6 bg-[#c0c0c0] ml-[5px] mr-1" />
            <button type="button" aria-label="Function wizard"><FxIcon /></button>
            <button type="button" aria-label="Select function" className="flex items-center gap-[2px]">
              <Svg><Glyph x="11" y="19" size="22" weight="300">Σ</Glyph></Svg>
              <Caret />
            </button>
            <button type="button" aria-label="Formula" className="ml-2 mr-[6px]">
              <svg viewBox="0 0 13 8" className="w-[13px] h-2" stroke={DARK} strokeWidth="2"><path d="M0 1h13 M0 7h13" /></svg>
            </button>
            <input type="text" aria-label="Formula input" className="flex-1 min-w-0 h-[22px] px-1 bg-white border border-[#b8b8b8] outline-none" />
            <button type="button" aria-label="Expand formula bar" className="w-[22px] flex justify-center pr-1">
              <svg viewBox="0 0 10 5" className="w-[10px] h-[5px]"><path fill="#505050" d="M0 0h10L5 5z" /></svg>
            </button>
          </div>
          <Grid />
          <div className="h-[9px] shrink-0 mr-[9px] pl-[2px] bg-[#d0d0d0] flex items-center">
            <span className="h-[7px] w-[581px] bg-[#6f6f6f]" />
            <span className="ml-auto w-[5px] h-full bg-[#a4a4a4] flex items-center justify-center"><i className="w-px h-[5px] bg-black" /></span>
          </div>
          <SheetTabs />
        </div>
        <Sidebar />
      </div>
      <StatusBar />
    </main>
  )
}

export default function App() {
  return (
    <div className="h-screen flex flex-col overflow-hidden bg-black font-['DejaVu_Sans',sans-serif]">
      <Panel />
      <div className="flex-1 min-h-0 relative overflow-hidden bg-[linear-gradient(90deg,#000000ff_0%,#000000b0_1%,#00000090_6%,#00000050_35%,transparent_75%),linear-gradient(180deg,transparent_50%,#000000b0_92%),repeating-linear-gradient(135deg,#00000c_0px,#00000c_2px,#0a18d4_3px,#0a18d4_4px,#00000c_5px)]">
        <Desktop />
        <CalcWindow />
      </div>
    </div>
  )
}
